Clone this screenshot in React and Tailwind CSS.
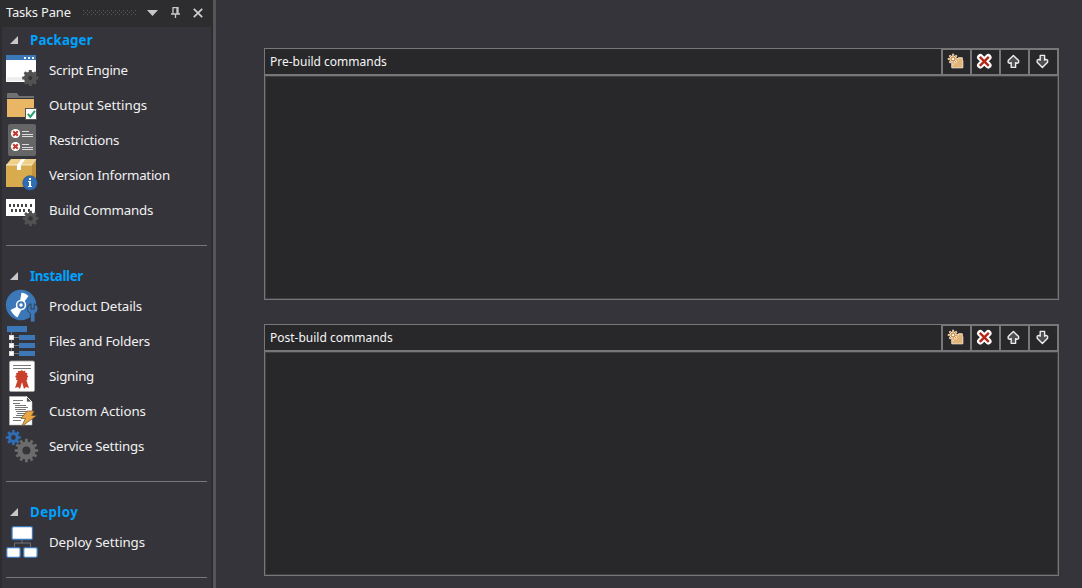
import React from "react";

function gearPath(cx, cy, outer, root, teeth) {
  const pts = [];
  const step = (Math.PI * 2) / teeth;
  for (let i = 0; i < teeth; i++) {
    const a = i * step - Math.PI / 2;
    [[-0.32, root], [-0.22, outer], [0.22, outer], [0.32, root]].forEach(([f, r]) => {
      pts.push(`${(cx + Math.cos(a + f * step) * r).toFixed(2)} ${(cy + Math.sin(a + f * step) * r).toFixed(2)}`);
    });
  }
  return `M${pts.join("L")}Z`;
}

function Gear({ x, y, r, root, teeth = 8, hole, color }) {
  return (
    <>
      <path d={gearPath(x, y, r, root, teeth)} fill={color} />
      <circle cx={x} cy={y} r={hole} fill="#35343a" />
    </>
  );
}

const icons = {
  script: (
    <>
      <rect x="0" y="1" width="30" height="27" fill="#fff" />
      <rect x="0" y="1" width="30" height="5" fill="#3c78b8" />
      <path d="M18 3h2v2h-2zM22 3h2v2h-2zM26 3h2v2h-2z" fill="#fff" />
      <rect x="1" y="23" width="18" height="4" fill="#eee" />
      <Gear x={24.3} y={24} r={8.2} root={6.4} hole={2} color="#525252" />
    </>
  ),
  output: (
    <>
      <path d="M1 9V5q0-1 1-1h9l2 3h15v2z" fill="#717171" />
      <rect x="1" y="10" width="27" height="18" fill="#e9b665" />
      <rect x="19.500" y="19.500" width="11" height="11" fill="#fff" stroke="#555" />
      <path d="m21.800 24.800 2.500 3 4.700-6" fill="none" stroke="#2a9d6e" strokeWidth="2" />
    </>
  ),
  restrictions: (
    <>
      <rect x="2" y="0" width="28" height="32" rx="2" fill="#666" />
      {[9.5, 22.5].map((y) => (
        <g key={y}>
          <circle cx="9.5" cy={y} r="4.6" fill="#fff" />
          <path d={`M7.2 ${y - 2.3}l4.6 4.6m0-4.6l-4.6 4.6`} stroke="#c6372b" strokeWidth="2" />
          <path d={`M16 ${y - 2}h7M16 ${y + 1}h11M16 ${y + 3}h11`} stroke="#dcdcdc" strokeWidth="1" />
        </g>
      ))}
    </>
  ),
  version: (
    <>
      <path d="M0 6 5 0h25l-4 6z" fill="#f0cf86" />
      <path d="M0 6h26v22H0z" fill="#d8ab4e" />
      <path d="M26 6l4-6v22l-4 6z" fill="#c4943c" />
      <path d="M15.500 0h4l-4.500 6v5h-4V6z" fill="#fff" />
      <path d="M0 6h26l4-6" fill="none" stroke="#fff" strokeWidth=".7" />
      <circle cx="24" cy="24" r="7.300" fill="#2f6eb5" stroke="#2c4a70" strokeWidth=".6" />
      <path d="M23 19h2v2h-2zM22 22h3v5h1v1h-4v-1h1v-4h-1z" fill="#fff" />
    </>
  ),
  build: (
    <>
      <rect x="0" y="5" width="29" height="17" fill="#fff" />
      <path
        d="M3 10h2v3H3zM7 10h2v3H7zM11 10h2v3h-2zM15 10h2v3h-2zM19 10h2v3h-2zM24 10h2v3h-2zM5 15h2v3H5zM9 15h2v3H9zM13 15h2v3h-2zM17 15h2v3h-2zM22 15h2v3h-2z"
        fill="#454545"
      />
      <Gear x={24.5} y={24.5} r={7.8} root={5.9} hole={2.3} color="#525252" />
    </>
  ),
  product: (
    <>
      <circle cx="15" cy="15" r="15.200" fill="#3c78b8" />
      <path d="M15.500 2.500q4.500.5 7 3.500L18 12l-4-1zM4.500 20l7-3.500 4 3-4 8q-4-2-7-7.500z" fill="#fff" />
      <circle cx="15" cy="15" r="5.200" fill="#fff" />
      <circle cx="15" cy="15" r="2.700" fill="none" stroke="#3c78b8" strokeWidth="2" />
      <path
        d="M25 13.700Q21.300 15 21.300 18.700q0 3.300 3 4.700v8.600h4.700v-8.600q3-1.400 3-4.700 0-3.700-3.700-5v5.300h-3.300z"
        fill="#3c78b8"
        stroke="#35343a"
        strokeWidth=".8"
      />
    </>
  ),
  files: (
    <>
      <rect x="1" y="1" width="20" height="6" fill="#3c78b8" />
      <path d="M5.500 7v21M5.500 12.500H13M5.500 20.500H13M5.500 28.500H13" fill="none" stroke="#777" />
      {[10, 18, 26].map((y) => (
        <g key={y}>
          <rect x="13" y={y} width="16" height="5" fill="#3c78b8" />
          <rect x="3.500" y={y + 0.5} width="4" height="4" fill="#fff" stroke="#ddd" />
        </g>
      ))}
    </>
  ),
  signing: (
    <>
      <rect x="3.500" y="1" width="25" height="30.500" rx="1.500" fill="#fff" stroke="#aaa" strokeWidth=".8" />
      <path d="M7 5.500h18M7 8.500h18" stroke="#777" />
      <path d="m12 19-3 9 3-1 2 2 2-7 2 7 2-2 3 1-3-9z" fill="#c9412d" />
      <path d={gearPath(15.7, 16.5, 6.4, 5.5, 12)} fill="#c9412d" />
    </>
  ),
  custom: (
    <>
      <path d="M3.500 1.500h17l5.500 5.500v23H3.500z" fill="#fff" stroke="#bbb" strokeWidth=".6" />
      <path d="M20.500 1.500V7H26z" fill="#555" stroke="#fff" strokeWidth=".8" />
      <path
        d="M7 5.500h10M7 8.500h7M9 10.500h11M9 12.500h13M9 14.500h11M10 16.500h11M11 18.500h8M10 20.500h8M7 22.500h10M7 25.500h8"
        stroke="#777"
        strokeWidth="1"
      />
      <path d="M21 16h7.500l-3 4.500h5.500L15.500 31.500l4-8H15z" fill="#eaa641" stroke="#584025" strokeWidth=".6" />
    </>
  ),
  service: (
    <>
      <Gear x={7.4} y={7.5} r={7.6} root={5.4} hole={2.4} color="#2f6eb5" />
      <Gear x={20.4} y={20.5} r={11.8} root={8.9} teeth={12} hole={4} color="#6b6b6b" />
    </>
  ),
  deploy: (
    <>
      <path d="M16 14v3.500M8.500 21v-4h16v4" fill="none" stroke="#727276" />
      <rect x="6" y="0.700" width="20.500" height="12.800" rx="1.500" fill="#fff" stroke="#3c78b8" strokeWidth="1.300" />
      <rect x="0.700" y="21.600" width="13.500" height="9.700" rx="1.500" fill="#fff" stroke="#3c78b8" strokeWidth="1.300" />
      <rect x="17.700" y="21.600" width="13.500" height="9.700" rx="1.500" fill="#fff" stroke="#3c78b8" strokeWidth="1.300" />
    </>
  ),
};

const groups = [
  {
    title: "Packager",
    tracking: "tracking-[0.15px]",
    items: [
      ["script", "Script Engine", "tracking-[-0.24px]"],
      ["output", "Output Settings", "tracking-[-0.03px]"],
      ["restrictions", "Restrictions", "tracking-[-0.24px]"],
      ["version", "Version Information", "tracking-[-0.24px]"],
      ["build", "Build Commands", "tracking-[-0.2px]"],
    ],
  },
  {
    title: "Installer",
    tracking: "tracking-[-0.35px]",
    items: [
      ["product", "Product Details", "tracking-[-0.14px]"],
      ["files", "Files and Folders", "tracking-[-0.2px]"],
      ["signing", "Signing", "tracking-[-0.28px]"],
      ["custom", "Custom Actions", "tracking-[-0.04px]"],
      ["service", "Service Settings", "tracking-[-0.2px]"],
    ],
  },
  {
    title: "Deploy",
    tracking: "tracking-[0.42px]",
    items: [["deploy", "Deploy Settings", "tracking-[-0.1px]"]],
  },
];

function Group({ title, tracking, items }) {
  return (
    <section className="px-1">
      <h2 className={`flex h-[25px] items-center pl-1 pt-px text-[13.3px] font-bold leading-[18px] text-[#00a2ff] ${tracking}`}>
        <svg className="mr-3 h-2 w-2" viewBox="0 0 8 8">
          <path d="M8 0v8H0z" fill="#c8c8c8" />
        </svg>
        {title}
      </h2>
      <ul>
        {items.map(([icon, label, spacing]) => (
          <li key={label} className="flex h-[35px] items-center">
            <svg className="mr-[11px] mt-px h-8 w-8 shrink-0 overflow-visible" viewBox="0 0 32 32">
              {icons[icon]}
            </svg>
            <span className={`whitespace-nowrap text-[13.3px] leading-[18px] text-[#f1f1f1] ${spacing}`}>{label}</span>
          </li>
        ))}
      </ul>
      <hr className="mb-[17px] mt-[18px] h-px border-0 bg-[#77777a]" />
    </section>
  );
}

function TasksPane() {
  return (
    <aside className="flex h-full w-[213px] shrink-0 flex-col bg-[#2d2d30] px-[2px]">
      <header className="flex h-[27px] shrink-0 items-center pb-[3px] pl-1 text-[#f1f1f1]">
        <span className="w-[77px] whitespace-nowrap text-[13px] leading-[18px] tracking-[-0.2px]">Tasks Pane</span>
        <svg className="h-[5px] w-[54px]" viewBox="0 0 54 5">
          {Array.from({ length: 14 }, (_, i) => (
            <path key={i} d={`M${i * 4} 0h1v1h-1zM${i * 4 + 2} 2h1v1h-1zM${i * 4} 4h1v1h-1z`} fill="#5c5c60" />
          ))}
        </svg>
        <svg className="ml-[10px] mt-[2px] h-[6px] w-[11px]" viewBox="0 0 11 6">
          <path d="M0 0h11L5.500 6z" fill="#c8c8c8" />
        </svg>
        <svg className="ml-[13px] h-[11px] w-[9px]" viewBox="0 0 9 11">
          <path d="M2 7V.5h5V7M6 .5V7M0 7h9M4.500 7v4" fill="none" stroke="#c8c8c8" strokeWidth="1.300" />
        </svg>
        <svg className="ml-[13px] mt-px h-[10px] w-[10px]" viewBox="0 0 10 10">
          <path d="m.8.8 8.400 8.400m0-8.400L.8 9.200" stroke="#d0d0d0" strokeWidth="1.700" />
        </svg>
      </header>
      <div className="min-h-0 flex-1 overflow-hidden bg-[#35343a]">
        {groups.map((g) => (
          <Group key={g.title} {...g} />
        ))}
      </div>
    </aside>
  );
}

const toolIcons = [
  <g transform="translate(.8 .8)">
    <path d="M5 6h4l1.500-2h4v2l.5 1v7H4V9z" fill="#e3b477" stroke="#f5e3c6" strokeWidth="1" />
    <circle cx="5.300" cy="5.300" r="3.600" fill="#f8e3c4" />
    <path d="M5.300 0v10.600M0 5.300h10.600M1.600 1.600 9 9M9 1.600 1.600 9" stroke="#fae9d0" strokeWidth="2" />
    <path d="M5.300 .6v9.400M.6 5.300H10M2 2l6.600 6.600M8.600 2 2 8.600" stroke="#c0792a" strokeWidth=".9" />
    <circle cx="5.300" cy="5.300" r="1.600" fill="#fff" stroke="#c0792a" strokeWidth=".7" />
  </g>,
  <g transform="translate(.3 .3)">
    <path d="m4 4 8 8m0-8-8 8" stroke="#fff" strokeWidth="6.500" strokeLinecap="round" />
    <path d="m3.500 3.500 9 9m0-9-9 9" stroke="#b4281a" strokeWidth="2.400" />
  </g>,
  <path transform="translate(.4 .4)" d="M8 2 2.800 7.200v2L4.500 10l1.300-.8V14h4.400V9.200l1.300.8 1.700-.8v-2z" fill="#505052" stroke="#ececec" strokeWidth="1.400" strokeLinejoin="round" />,
  <path transform="translate(.4 .4)" d="M8 14 2.800 8.800v-2L4.500 6l1.300.8V2h4.400v4.800l1.300-.8 1.700.8v2z" fill="#505052" stroke="#ececec" strokeWidth="1.400" strokeLinejoin="round" />,
];

function CommandPanel({ title }) {
  return (
    <section className="flex h-[252px] flex-col border border-[#77777a] bg-[#28282a]">
      <header className="flex h-[27px] shrink-0 border-b-2 border-r border-[#77777a]">
        <h3 className="flex-1 pl-[5px] text-[12px] font-normal leading-[25px] text-[#f5f5f5]">{title}</h3>
        {toolIcons.map((icon, i) => (
          <button key={i} className="flex w-[29px] items-center justify-center border-l-2 border-t border-[#77777a] pb-[2px] pr-[3px]">
            <svg className="h-4 w-4 shrink-0 overflow-visible" viewBox="0 0 16 16">
              {icon}
            </svg>
          </button>
        ))}
      </header>
      <div className="flex-1 border border-[#414144]" />
    </section>
  );
}

export default function App() {
  return (
    <div className="flex h-[588px] w-[1082px] overflow-hidden bg-[#35343a] font-['Noto_Sans',sans-serif]">
      <TasksPane />
      <div className="w-[3px] shrink-0 bg-[#555557]" />
      <main className="flex flex-1 flex-col gap-6 pl-12 pr-[23px] pt-12">
        <CommandPanel title="Pre-build commands" />
        <CommandPanel title="Post-build commands" />
      </main>
    </div>
  );
}
